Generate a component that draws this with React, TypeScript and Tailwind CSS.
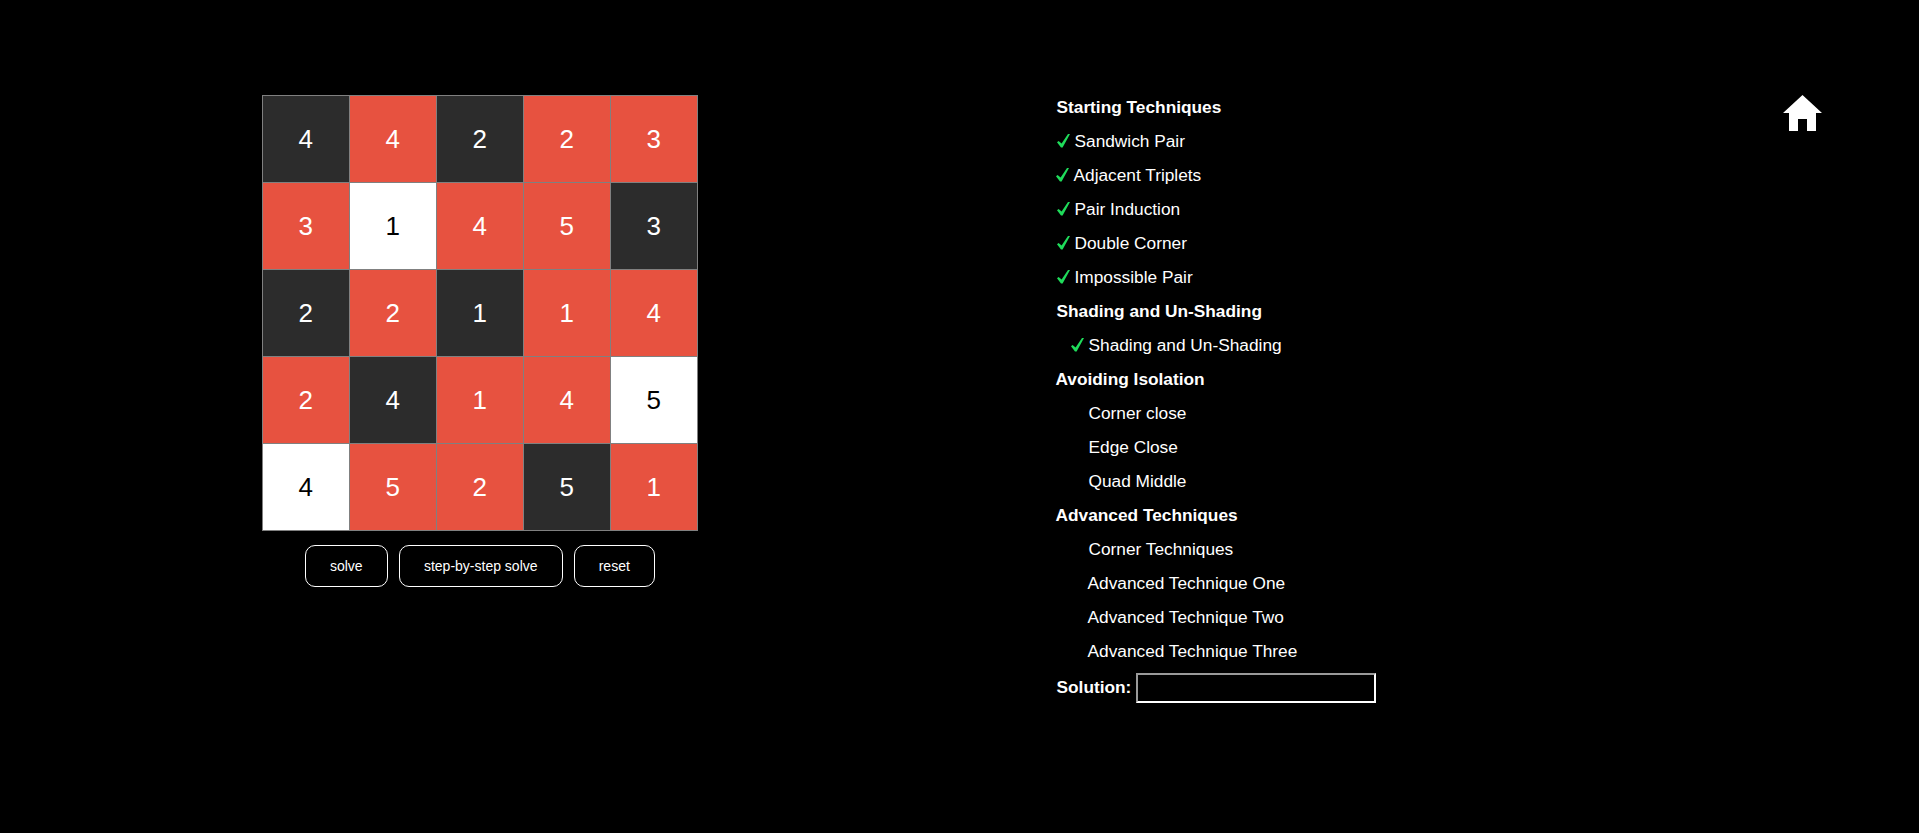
const grid = [
  [[4, "b"], [4, "r"], [2, "b"], [2, "r"], [3, "r"]],
  [[3, "r"], [1, "w"], [4, "r"], [5, "r"], [3, "b"]],
  [[2, "b"], [2, "r"], [1, "b"], [1, "r"], [4, "r"]],
  [[2, "r"], [4, "b"], [1, "r"], [4, "r"], [5, "w"]],
  [[4, "w"], [5, "r"], [2, "r"], [5, "b"], [1, "r"]],
] as const;

const cellColors = {
  b: "bg-[#2c2c2c] text-white",
  r: "bg-[#e75240] text-white",
  w: "bg-white text-black",
};

type Row =
  | { kind: "heading"; label: string; className?: string }
  | { kind: "item"; label: string; done?: boolean; className?: string };

const rows: Row[] = [
  { kind: "heading", label: "Starting Techniques" },
  { kind: "item", label: "Sandwich Pair", done: true },
  { kind: "item", label: "Adjacent Triplets", done: true, className: "-ml-px" },
  { kind: "item", label: "Pair Induction", done: true },
  { kind: "item", label: "Double Corner", done: true },
  { kind: "item", label: "Impossible Pair", done: true },
  { kind: "heading", label: "Shading and Un-Shading" },
  { kind: "item", label: "Shading and Un-Shading", done: true, className: "ml-[14px]" },
  { kind: "heading", label: "Avoiding Isolation", className: "-ml-px" },
  { kind: "item", label: "Corner close", className: "ml-8" },
  { kind: "item", label: "Edge Close", className: "ml-8" },
  { kind: "item", label: "Quad Middle", className: "ml-8" },
  { kind: "heading", label: "Advanced Techniques", className: "-ml-px" },
  { kind: "item", label: "Corner Techniques", className: "ml-8" },
  { kind: "item", label: "Advanced Technique One", className: "ml-[31px]" },
  { kind: "item", label: "Advanced Technique Two", className: "ml-[31px]" },
  { kind: "item", label: "Advanced Technique Three", className: "ml-[31px]" },
];

function HomeIcon() {
  return (
    <svg className="block h-[37px] w-[39px]" viewBox="0 0 39 37" fill="white">
      <path d="M19.5 0 L39 18 L33 18 L33 36 L24 36 L24 24 L15 24 L15 36 L6 36 L6 18 L0 18 Z" />
    </svg>
  );
}

function Check() {
  return (
    <svg className="mr-[5px] mb-[2px] block h-[14px] w-[13px] shrink-0" viewBox="0 0 13 14" fill="#1fdb5a">
      <path d="M0 8.2 L1.6 7 L4.6 9.6 L11 0 L13 0 L5.6 13.4 L4 13.4 Z" />
    </svg>
  );
}

export default function App() {
  return (
    <div className="flex min-h-[833px] bg-black font-['Liberation_Sans',Arial,sans-serif] text-white">
      <div className="flex w-1/2 flex-col items-center pt-[95px]">
        <div className="grid grid-cols-[repeat(5,87px)] border-t border-l border-[#808080]">
          {grid.flat().map(([value, color], i) => (
            <div
              key={i}
              className={`flex h-[87px] items-center justify-center border-r border-b border-[#808080] text-[26px] ${cellColors[color]}`}
            >
              {value}
            </div>
          ))}
        </div>
        <div className="mt-[14px] flex gap-[11px] text-sm">
          <button className="h-[42px] w-[83px] rounded-[10px] border border-white">solve</button>
          <button className="h-[42px] w-[164px] rounded-[10px] border border-white">step-by-step solve</button>
          <button className="h-[42px] w-[81px] rounded-[10px] border border-white">reset</button>
        </div>
      </div>

      <div className="flex w-1/2 justify-between pt-[91px] pr-[97px] pl-[97px]">
        <div className="text-[17.3px]">
          {rows.map((row) =>
            row.kind === "heading" ? (
              <div key={row.label + "h"} className={`flex h-[34px] items-center font-bold ${row.className ?? ""}`}>
                {row.label}
              </div>
            ) : (
              <div key={row.label} className={`flex h-[34px] items-center ${row.className ?? ""}`}>
                {row.done ? <Check /> : null}
                {row.label}
              </div>
            ),
          )}
          <div className="mt-[2px] flex h-[34px] items-center gap-[5px] font-bold">
            Solution:
            <input className="h-[30px] w-[240px] border-2 border-t-[#9a9a9a] border-r-white border-b-white border-l-[#9a9a9a] bg-black outline-none" />
          </div>
        </div>
        <div className="pt-[4px]">
          <HomeIcon />
        </div>
      </div>
    </div>
  );
}
